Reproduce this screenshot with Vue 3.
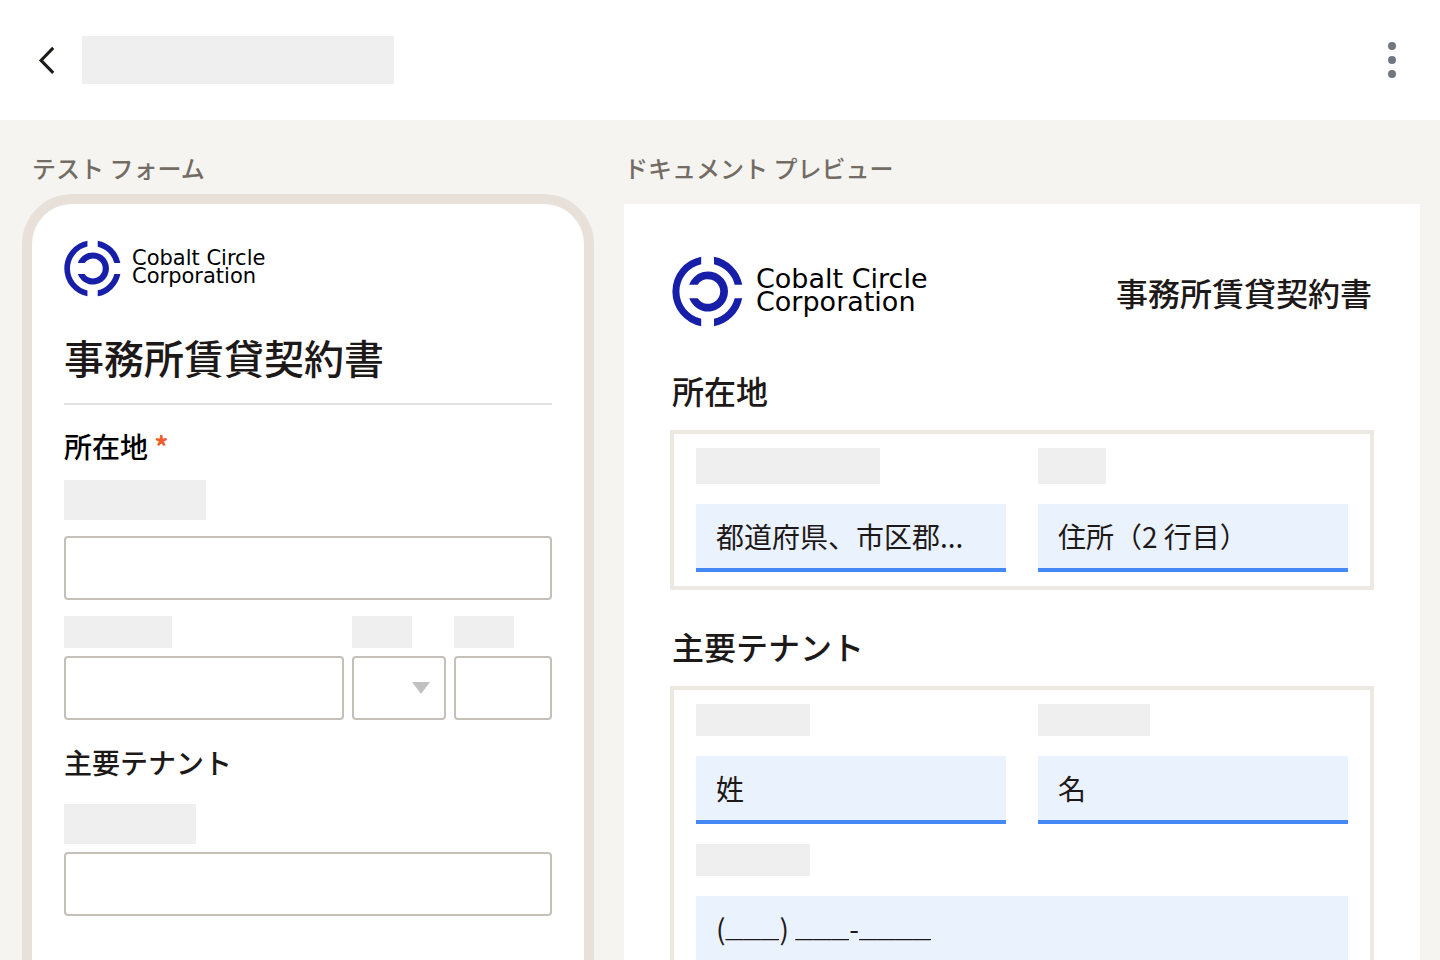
<script setup>
import { ref } from 'vue'

const title = '事務所賃貸契約書'
const region = ref('都道府県、市区郡...')
const address2 = ref('住所（2 行目）')
const lastName = ref('姓')
const firstName = ref('名')
const areaCode = ref('___')
const exchange = ref('___')
const subscriber = ref('____')
</script>

<template>
  <div class="app">
    <header class="topbar">
      <button class="icon-button" type="button" aria-label="戻る">
        <svg width="18" height="30" viewBox="0 0 18 30" fill="none" stroke="#1c1b1a" stroke-width="3">
          <path d="M15.2 2.9 3 15.4 15.2 27.9" />
        </svg>
      </button>
      <div class="skeleton page-name"></div>
      <button class="icon-button menu" type="button" aria-label="メニュー">
        <svg width="10" height="38" viewBox="0 0 10 38" fill="#6f7780">
          <circle cx="5" cy="5" r="4" />
          <circle cx="5" cy="19" r="4" />
          <circle cx="5" cy="33" r="4" />
        </svg>
      </button>
    </header>

    <main class="workspace">
      <section class="column">
        <h2 class="caption form-caption">テスト フォーム</h2>
        <form class="phone" @submit.prevent>
          <div class="logo logo-small">
            <svg viewBox="-35.5 -35.5 71 71" fill="#171fa8" aria-hidden="true">
              <path d="M-6.3-34.7A35.3 35.3 0 0 0-6.3 34.7V27.3A28 28 0 0 1-6.3-27.3Z" />
              <path d="M6.5-34.7A35.3 35.3 0 0 1 34.7-6.8H27.2A28 28 0 0 0 6.5-27.2Z" />
              <path d="M6.5 34.7A35.3 35.3 0 0 0 34.7 6.8H27.2A28 28 0 0 1 6.5 27.2Z" />
              <path d="M-18.3-6.8A20 20 0 1 1-18.3 6.8H-9.8A12.3 12.3 0 1 0-9.8-6.8Z" />
            </svg>
            <div class="wordmark">Cobalt Circle<br />Corporation</div>
          </div>
          <h1 class="form-title">{{ title }}</h1>

          <h3 class="form-label">所在地 <span class="required">*</span></h3>
          <label class="skeleton street-label" for="street"></label>
          <input id="street" class="box" type="text" aria-label="所在地" required />

          <div class="city-row">
            <div class="stack">
              <label class="skeleton city-label" for="city"></label>
              <input id="city" class="box" type="text" aria-label="市区町村" />
            </div>
            <div class="stack">
              <label class="skeleton short-label" for="state"></label>
              <select id="state" class="box" aria-label="都道府県">
                <option></option>
              </select>
            </div>
            <div class="stack">
              <label class="skeleton short-label" for="zip"></label>
              <input id="zip" class="box" type="text" aria-label="郵便番号" />
            </div>
          </div>

          <h3 class="form-label tenant">主要テナント</h3>
          <label class="skeleton tenant-label" for="tenant"></label>
          <input id="tenant" class="box" type="text" aria-label="主要テナント" />
        </form>
      </section>

      <section class="column">
        <h2 class="caption preview-caption">ドキュメント プレビュー</h2>
        <article class="document">
          <div class="document-head">
            <div class="logo logo-large">
              <svg viewBox="-35.5 -35.5 71 71" fill="#171fa8" aria-hidden="true">
                <path d="M-6.3-34.7A35.3 35.3 0 0 0-6.3 34.7V27.3A28 28 0 0 1-6.3-27.3Z" />
                <path d="M6.5-34.7A35.3 35.3 0 0 1 34.7-6.8H27.2A28 28 0 0 0 6.5-27.2Z" />
                <path d="M6.5 34.7A35.3 35.3 0 0 0 34.7 6.8H27.2A28 28 0 0 1 6.5 27.2Z" />
                <path d="M-18.3-6.8A20 20 0 1 1-18.3 6.8H-9.8A12.3 12.3 0 1 0-9.8-6.8Z" />
              </svg>
              <div class="wordmark">Cobalt Circle<br />Corporation</div>
            </div>
            <p class="document-title">{{ title }}</p>
          </div>

          <h3 class="section-title">所在地</h3>
          <div class="panel">
            <div class="field">
              <label class="skeleton tall region-label" for="region"></label>
              <input id="region" v-model="region" class="entry" type="text" aria-label="都道府県、市区郡" />
            </div>
            <div class="field">
              <label class="skeleton tall address-label" for="address2"></label>
              <input id="address2" v-model="address2" class="entry" type="text" aria-label="住所" />
            </div>
          </div>

          <h3 class="section-title">主要テナント</h3>
          <div class="panel">
            <div class="field">
              <label class="skeleton name-label" for="last"></label>
              <input id="last" v-model="lastName" class="entry" type="text" aria-label="姓" />
            </div>
            <div class="field">
              <label class="skeleton first-label" for="first"></label>
              <input id="first" v-model="firstName" class="entry" type="text" aria-label="名" />
            </div>
            <div class="field wide">
              <label class="skeleton name-label" for="area"></label>
              <div class="entry number" role="group" aria-label="電話番号">
                <span>(</span>
                <input id="area" v-model="areaCode" class="digits" type="tel" aria-label="市外局番" />
                <span>)&nbsp;</span>
                <input v-model="exchange" class="digits" type="tel" aria-label="市内局番" />
                <span>-</span>
                <input v-model="subscriber" class="digits four" type="tel" aria-label="加入者番号" />
              </div>
            </div>
          </div>
        </article>
      </section>
    </main>
  </div>
</template>

<style scoped>
.app {
  display: flex;
  flex-direction: column;
  height: 100vh;
  overflow: hidden;
  background: #f6f4f1;
  color: #1e1919;
  font-family: "Noto Sans CJK JP", sans-serif;
}

.app * {
  box-sizing: border-box;
}

h1,
h2,
h3,
p {
  margin: 0;
  font-weight: 500;
}

.topbar {
  display: flex;
  flex: none;
  align-items: center;
  height: 120px;
  padding: 0 32px 0 28px;
  background: #fff;
}

.icon-button {
  display: flex;
  align-items: center;
  justify-content: center;
  width: 32px;
  height: 48px;
  padding: 0;
  border: 0;
  background: none;
}

.icon-button:first-child {
  width: 38px;
}

.menu {
  margin-left: auto;
}

.skeleton {
  display: block;
  height: 32px;
  background: #efefef;
}

.page-name {
  width: 312px;
  height: 48px;
  margin-left: 16px;
}

.workspace {
  display: grid;
  flex: 1 0 auto;
  grid-template-columns: 572fr 796fr;
  gap: 30px;
  padding: 28px 20px 0 22px;
}

.column {
  display: flex;
  flex-direction: column;
  min-width: 0;
}

.caption {
  color: #736c64;
  font-size: 24px;
  line-height: 40px;
}

.form-caption {
  margin-bottom: 6px;
  padding-left: 10px;
}

.preview-caption {
  margin-bottom: 16px;
}

.phone {
  flex: 1;
  padding: 36px 32px 64px;
  border: 10px solid #e7e1da;
  border-bottom: 0;
  border-radius: 50px 50px 0 0;
  background: #fff;
}

.logo {
  display: flex;
  align-items: center;
  color: #000;
  font-family: "DejaVu Sans", sans-serif;
}

.logo svg {
  flex: none;
}

.wordmark {
  padding-bottom: 3px;
}

.logo-small {
  gap: 11px;
  font-size: 21px;
  line-height: 18px;
}

.logo-small svg {
  width: 57px;
  height: 57px;
}

.logo-large {
  gap: 13px;
  font-size: 27px;
  line-height: 23px;
}

.logo-large svg {
  width: 71px;
  height: 71px;
}

.form-title {
  margin-top: 30px;
  padding-bottom: 16px;
  border-bottom: 2px solid #e0e0e0;
  font-size: 40px;
  line-height: 60px;
}

.form-label {
  margin-top: 21px;
  color: #000;
  font-size: 28px;
  line-height: 40px;
}

.form-label.tenant {
  margin-top: 22px;
  color: #1e1919;
}

.required {
  color: #f15a2b;
  font-weight: 700;
}

.street-label {
  width: 142px;
  height: 40px;
  margin: 14px 0 16px;
}

.box {
  display: block;
  width: 100%;
  height: 64px;
  padding: 0 16px;
  border: 2px solid #c5c1ba;
  border-radius: 4px;
  background: #fff;
  font-family: inherit;
  font-size: 28px;
}

select.box {
  appearance: none;
  background: #fff url("data:image/svg+xml,%3Csvg xmlns='http://www.w3.org/2000/svg' width='18' height='12'%3E%3Cpath d='M0 0h18L9 12z' fill='%23c1c1c1'/%3E%3C/svg%3E") no-repeat right 14px center;
}

.city-row {
  display: grid;
  grid-template-columns: 280fr 94fr 98fr;
  gap: 8px;
  margin-top: 16px;
}

.stack {
  display: flex;
  flex-direction: column;
  gap: 8px;
  min-width: 0;
}

.city-label {
  width: 108px;
}

.short-label {
  width: 60px;
}

.tenant-label {
  width: 132px;
  height: 40px;
  margin: 22px 0 8px;
}

.document {
  flex: 1;
  padding: 52px 46px 64px;
  background: #fff;
}

.document-head {
  display: flex;
  align-items: center;
  justify-content: space-between;
  margin-bottom: 39px;
  padding: 0 2px;
}

.document-title {
  font-size: 32px;
  line-height: 48px;
}

.section-title {
  padding: 0 2px;
  font-size: 32px;
  line-height: 48px;
}

.panel {
  display: grid;
  grid-template-columns: 1fr 1fr;
  gap: 20px 32px;
  margin: 16px 0 32px;
  padding: 14px 22px;
  border: 4px solid #ece8e2;
}

.field {
  display: flex;
  flex-direction: column;
  gap: 20px;
  min-width: 0;
}

.wide {
  grid-column: 1 / -1;
}

.entry {
  width: 100%;
  height: 68px;
  padding: 0 20px;
  border: 0;
  border-bottom: 4px solid #4589f7;
  border-radius: 0;
  background: #eaf2fe;
  color: #1e1919;
  font-family: inherit;
  font-size: 28px;
}

.number {
  display: flex;
  align-items: center;
}

.digits {
  width: 54px;
  height: 42px;
  padding: 2px 0 0;
  border: 0;
  background: none;
  color: inherit;
  font-family: "Liberation Mono", monospace;
  font-size: 30px;
  font-weight: 700;
}

.digits.four {
  width: 72px;
}

.tall {
  height: 36px;
}

.region-label {
  width: 184px;
}

.address-label {
  width: 68px;
}

.name-label {
  width: 114px;
}

.first-label {
  width: 112px;
}
</style>

<style>
body {
  margin: 0;
}
</style>
